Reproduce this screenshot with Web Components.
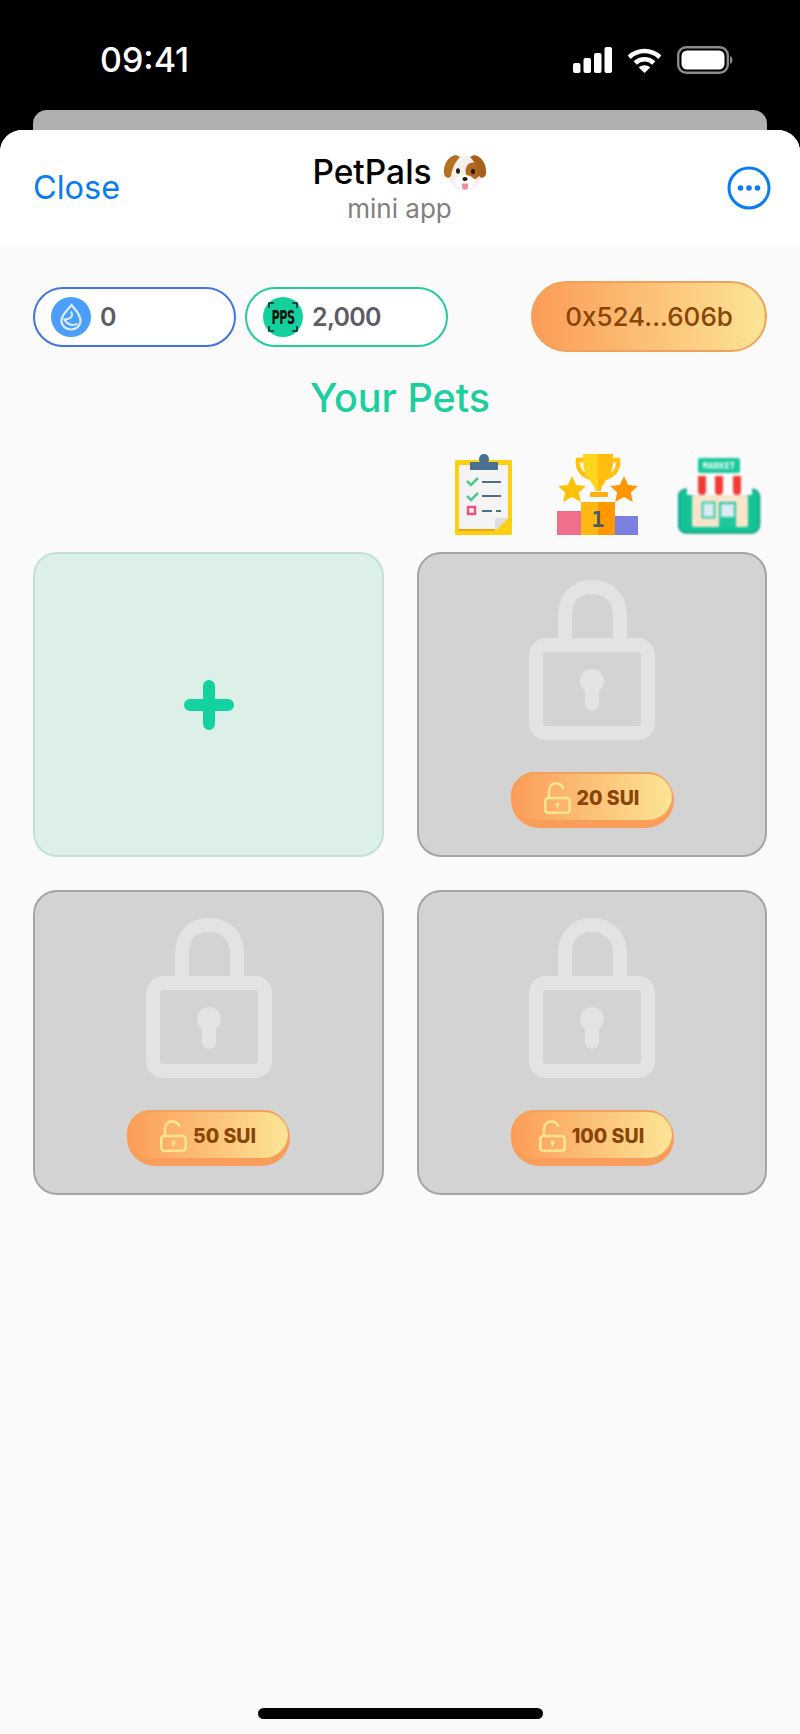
<!DOCTYPE html>
<html lang="en">
<head>
<meta charset="utf-8">
<title>PetPals</title>
<style>
  html, body { margin: 0; padding: 0; background: #000; }
  body { width: 800px; height: 1734px; font-family: Inter, "Liberation Sans", sans-serif; overflow: hidden; display: flex; flex-direction: column; }
</style>
</head>
<body>
<app-status-bar></app-status-bar>
<app-sheet>
  <sheet-header slot="header"></sheet-header>
  <balance-row>
    <balance-pill color="#3f75e2">
      <svg slot="icon" width="40" height="40" viewBox="0 0 40 40">
        <circle cx="20" cy="20" r="20" fill="#4c9efb"/>
        <path d="M20.5 8 C24 12.5 29.5 17 29.5 23.5 C29.5 29 25 32.5 20 32.5 C15 32.5 10.5 29 10.5 23.5 C10.5 18 16.5 13 20.5 8 Z" fill="none" stroke="#dcedff" stroke-width="2.2"/>
        <path d="M20 14.5 C23 19.5 19 22.5 13.5 22.5 C16 27.5 22 29.5 26.5 26.5" fill="none" stroke="#dcedff" stroke-width="2"/>
      </svg>
      0
    </balance-pill>
    <balance-pill color="#21cc9d">
      <svg slot="icon" width="40" height="40" viewBox="0 0 40 40">
        <circle cx="20" cy="20" r="20" fill="#14d09e"/>
        <path d="M6 11V6h5M34 11V6h-5M6 29v5h5M34 29v5h-5" fill="none" stroke="#0b2c28" stroke-width="1.6"/>
        <text transform="translate(20 27) scale(.66 1)" text-anchor="middle" font-family="'DejaVu Sans Condensed','DejaVu Sans',sans-serif" font-size="19" fill="#06130f">PPS</text>
      </svg>
      2,000
    </balance-pill>
    <wallet-chip>0x524...606b</wallet-chip>
  </balance-row>
  <section-title>Your Pets</section-title>
  <quick-icons></quick-icons>
  <pet-grid>
    <pet-slot add></pet-slot>
    <pet-slot price="20 SUI"></pet-slot>
    <pet-slot price="50 SUI"></pet-slot>
    <pet-slot price="100 SUI"></pet-slot>
  </pet-grid>
  <home-indicator slot="footer"></home-indicator>
</app-sheet>

<script>
class AppStatusBar extends HTMLElement {
  constructor() {
    super();
    this.attachShadow({ mode: "open" });
  }

  connectedCallback() {
    this.shadowRoot.innerHTML = `
      <style>
        :host { display: block; background: #000; height: 130px; flex: none; }
        .row { height: 110px; box-sizing: border-box; padding: 41px 67px 0 100px; display: flex; justify-content: space-between; align-items: flex-start; }
        .time { color: #fff; font: 500 34px/38px Inter, "Liberation Sans", sans-serif; }
        .icons { display: flex; gap: 15px; align-items: center; margin-top: 5px; }
        svg { display: block; }
        .back { height: 20px; margin: 0 33px; background: #b0b0b0; border-radius: 14px 14px 0 0; }
      </style>
      <div class="row">
        <span class="time">09:41</span>
        <div class="icons">
          <svg width="39" height="26" viewBox="0 0 39 26" fill="#fff">
            <rect x="0" y="16" width="7.5" height="10" rx="2"/>
            <rect x="10.5" y="11" width="7.5" height="15" rx="2"/>
            <rect x="21" y="6" width="7.5" height="20" rx="2"/>
            <rect x="31.5" y="0" width="7.5" height="26" rx="2"/>
          </svg>
          <svg width="35" height="25" viewBox="0 0 35 25" fill="none" stroke="#fff" stroke-width="4.6">
            <path d="M2.2 9.2 C11 1 24 1 32.8 9.2"/>
            <path d="M8.2 15 C13.6 10 21.4 10 26.8 15"/>
            <path d="M17.5 25 L11.8 19.5 C15 16.6 20 16.6 23.2 19.5 Z" fill="#fff" stroke="none"/>
          </svg>
          <svg width="56" height="28" viewBox="0 0 56 28">
            <rect x="1.2" y="1.2" width="49.6" height="25.6" rx="8" fill="none" stroke="#8c8c8c" stroke-width="2.4"/>
            <rect x="4.5" y="4.5" width="43" height="19" rx="5.5" fill="#fff"/>
            <path d="M53 10 C55 11 55.5 12.5 55.5 14 C55.5 15.5 55 17 53 18 Z" fill="#8c8c8c"/>
          </svg>
        </div>
      </div>
      <div class="back"></div>
    `;
  }
}

class AppSheet extends HTMLElement {
  constructor() {
    super();
    this.attachShadow({ mode: "open" });
  }

  connectedCallback() {
    this.shadowRoot.innerHTML = `
      <style>
        :host { display: flex; flex-direction: column; flex: 1; min-height: 0; background: #fafafa; border-radius: 22px 22px 0 0; overflow: hidden; }
        main { flex: 1; padding: 36px 33px 0; display: flex; flex-direction: column; }
      </style>
      <slot name="header"></slot>
      <main><slot></slot></main>
      <slot name="footer"></slot>
    `;
  }
}

class SheetHeader extends HTMLElement {
  constructor() {
    super();
    this.attachShadow({ mode: "open" });
  }

  connectedCallback() {
    this.shadowRoot.innerHTML = `
      <style>
        :host { display: grid; grid-template-columns: 1fr auto 1fr; align-items: center; height: 115px; background: #fff; padding: 0 29px 0 33px; box-sizing: border-box; }
        .close { color: #0a7cf2; font: 400 32.5px/40px Inter, "Liberation Sans", sans-serif; }
        .center { text-align: center; margin: -1px 5px 0 0; }
        .name { display: flex; align-items: center; justify-content: center; gap: 11px; height: 44px; color: #000; font: 500 33.5px/44px Inter, "Liberation Sans", sans-serif; }
        .sub { color: #808080; font: 400 26px/32px Inter, "Liberation Sans", sans-serif; margin-top: -1px; }
        .menu { justify-self: end; display: block; }
      </style>
      <span class="close">Close</span>
      <div class="center">
        <div class="name">PetPals
          <svg width="44" height="40" viewBox="0 0 44 38">
            <ellipse cx="22" cy="20" rx="17" ry="17" fill="#f4efea"/>
            <ellipse cx="30" cy="18" rx="7.5" ry="8.5" fill="#b4681d"/>
            <path d="M13 2 C5 3 0 12 1 21 C2 25 6 26 8 23 C9 17 11 10 17 4 Z" fill="#b4701f"/>
            <path d="M31 2 C39 3 44 12 43 21 C42 25 38 26 36 23 C35 17 33 10 27 4 Z" fill="#a9601a"/>
            <ellipse cx="22" cy="29" rx="10" ry="7" fill="#fff"/>
            <ellipse cx="15" cy="18" rx="2" ry="2.8" fill="#2a1c14"/>
            <ellipse cx="30" cy="18.5" rx="2" ry="2.8" fill="#2a1c14"/>
            <ellipse cx="22" cy="26" rx="2.6" ry="2" fill="#1f1612"/>
            <path d="M19 30.5 H25 V34 C25 37.5 19 37.5 19 34 Z" fill="#ee8fa0"/>
          </svg>
        </div>
        <div class="sub">mini app</div>
      </div>
      <svg class="menu" width="44" height="44" viewBox="0 0 44 44">
        <circle cx="22" cy="22" r="20" fill="none" stroke="#0a7cf2" stroke-width="3"/>
        <circle cx="13.5" cy="22" r="2.8" fill="#0a7cf2"/>
        <circle cx="22" cy="22" r="2.8" fill="#0a7cf2"/>
        <circle cx="30.5" cy="22" r="2.8" fill="#0a7cf2"/>
      </svg>
    `;
  }
}

class BalanceRow extends HTMLElement {
  constructor() {
    super();
    this.attachShadow({ mode: "open" });
  }

  connectedCallback() {
    this.shadowRoot.innerHTML = `
      <style>
        :host { display: flex; align-items: center; gap: 9px; height: 71px; }
      </style>
      <slot></slot>
    `;
  }
}

class BalancePill extends HTMLElement {
  constructor() {
    super();
    this.attachShadow({ mode: "open" });
  }

  connectedCallback() {
    const color = this.getAttribute("color");
    this.shadowRoot.innerHTML = `
      <style>
        :host { display: flex; align-items: center; gap: 9px; box-sizing: border-box; width: 203px; height: 60px; padding-left: 16px; border: 2px solid ${color}; border-radius: 30px; background: #fff; color: #5d5c66; font: 600 25px/32px Inter, "Liberation Sans", sans-serif; letter-spacing: -0.7px; }
        ::slotted(svg) { display: block; flex: none; }
      </style>
      <slot name="icon"></slot>
      <span><slot></slot></span>
    `;
  }
}

class WalletChip extends HTMLElement {
  constructor() {
    super();
    this.attachShadow({ mode: "open" });
  }

  connectedCallback() {
    this.shadowRoot.innerHTML = `
      <style>
        :host { display: flex; align-items: center; justify-content: center; box-sizing: border-box; margin-left: auto; width: 236px; height: 71px; border: 2px solid #f0a25c; border-radius: 36px; background: linear-gradient(90deg, #fb9c58, #fde596); color: #8a4406; font: 500 26px/32px Inter, "Liberation Sans", sans-serif; }
      </style>
      <slot></slot>
    `;
  }
}

class SectionTitle extends HTMLElement {
  constructor() {
    super();
    this.attachShadow({ mode: "open" });
  }

  connectedCallback() {
    this.shadowRoot.innerHTML = `
      <style>
        :host { display: block; margin-top: 24px; text-align: center; color: #1dcf9f; font: 500 39.5px/44px Inter, "Liberation Sans", sans-serif; }
      </style>
      <slot></slot>
    `;
  }
}

class QuickIcons extends HTMLElement {
  constructor() {
    super();
    this.attachShadow({ mode: "open" });
  }

  connectedCallback() {
    this.shadowRoot.innerHTML = `
      <style>
        :host { display: flex; justify-content: flex-end; height: 82px; margin-top: 33px; padding-right: 6px; }
        svg { display: block; }
        .task { margin-right: 32px; filter: blur(0.4px); }
        .rank { margin-right: 39px; filter: blur(0.4px); }
        .shop { filter: blur(1px); }
      </style>
      <svg class="task" width="82" height="82" viewBox="443 453 82 82">
        <rect x="455" y="460" width="57" height="75" rx="1" fill="#ffcf14"/>
        <path d="M459 465 H508 V518 L495 531 H459 Z" fill="#f4f4f5"/>
        <rect x="459" y="529" width="36" height="2" fill="#f5a30f"/>
        <path d="M508 518 H497 Q495 518 495 520 V531 Z" fill="#dedede"/>
        <circle cx="484" cy="459" r="5" fill="#4a6f8f"/>
        <rect x="470" y="462" width="28" height="8" rx="1" fill="#4a6f8f"/>
        <path d="M467 481 L471 485 L478 478 M467 496 L471 500 L478 493" fill="none" stroke="#4fc98d" stroke-width="2.5"/>
        <path d="M482 482 H501 M482 496 H501 M482 511 H492 M496 511 H501" stroke="#4a6f8f" stroke-width="2"/>
        <rect x="468" y="507" width="7" height="7" fill="none" stroke="#f0547a" stroke-width="2.5"/>
      </svg>
      <svg class="rank" width="82" height="82" viewBox="557 453 82 82">
        <path d="M584 460 H578 C577 468 581 475 591 478 M612 460 H618 C619 468 615 475 605 478" fill="none" stroke="#ffc20e" stroke-width="4.5"/>
        <path d="M583 454 H598 V491 H595 C595 486 592 484 589 479 C585 474 583 468 583 460 Z" fill="#ffd51e"/>
        <path d="M613 454 H598 V491 H601 C601 486 604 484 607 479 C611 474 613 468 613 460 Z" fill="#ffbe0d"/>
        <rect x="590" y="492" width="18" height="5" rx="1" fill="#ffb00f"/>
        <path d="M572 476 L576.2 485 L586 486 L578.8 492.5 L580.8 502 L572 497 L563.2 502 L565.2 492.5 L558 486 L567.8 485 Z" fill="#ffc107"/>
        <path d="M624 476 L628.2 485 L638 486 L630.8 492.5 L632.8 502 L624 497 L615.2 502 L617.2 492.5 L610 486 L619.8 485 Z" fill="#ff9500"/>
        <rect x="557" y="511" width="24" height="24" fill="#f0708c"/>
        <rect x="615" y="516" width="23" height="19" fill="#7a80e0"/>
        <rect x="581" y="502" width="17" height="33" fill="#fdb813"/>
        <rect x="598" y="502" width="17" height="33" fill="#ff9800"/>
        <text x="598" y="527" text-anchor="middle" font-family="'DejaVu Sans Mono','Liberation Mono',monospace" font-weight="700" font-size="22" fill="#4d5a66">1</text>
      </svg>
      <svg class="shop" width="83" height="82" viewBox="678 453 83 82">
        <rect x="678.5" y="489" width="81" height="44" rx="8" fill="#13c296" stroke="#0e9a7b" stroke-width="1.5"/>
        <rect x="692" y="495" width="56" height="32" rx="2" fill="#f7e6cc"/>
        <rect x="687" y="476" width="65" height="19" fill="#fbfbfb"/>
        <path d="M698 476 h8 v15 a4 4 0 0 1 -8 0 Z M715 476 h8 v15 a4 4 0 0 1 -8 0 Z M733 476 h8 v15 a4 4 0 0 1 -8 0 Z" fill="#f03a35"/>
        <rect x="698" y="458" width="42" height="15" rx="2" fill="#19c79b"/>
        <text x="719" y="469" text-anchor="middle" font-family="'DejaVu Sans Mono',monospace" font-weight="700" font-size="9" fill="#e9fff8">MARKET</text>
        <rect x="702.5" y="502.5" width="12" height="15" fill="#dbeaf5" stroke="#3fcaa5" stroke-width="2"/>
        <rect x="719" y="502" width="17" height="25" fill="#1fc79a"/>
        <rect x="721" y="504" width="13" height="13" fill="#dbeaf5"/>
      </svg>
    `;
  }
}

class PetGrid extends HTMLElement {
  constructor() {
    super();
    this.attachShadow({ mode: "open" });
  }

  connectedCallback() {
    this.shadowRoot.innerHTML = `
      <style>
        :host { display: grid; grid-template-columns: 351px 350px; grid-auto-rows: 305px; gap: 33px; margin-top: 17px; }
      </style>
      <slot></slot>
    `;
  }
}

class PetSlot extends HTMLElement {
  constructor() {
    super();
    this.attachShadow({ mode: "open" });
  }

  connectedCallback() {
    if (this.hasAttribute("add")) {
      this.renderAdd();
    } else {
      this.renderLocked();
    }
  }

  renderAdd() {
    this.shadowRoot.innerHTML = `
      <style>
        :host { display: flex; align-items: center; justify-content: center; box-sizing: border-box; background: #ddf0e8; border: 2px solid #c5dfd4; border-radius: 24px; }
        svg { display: block; }
      </style>
      <svg width="50" height="50" viewBox="0 0 50 50">
        <path d="M25 6 V44 M6 25 H44" stroke="#12d2a0" stroke-width="12" stroke-linecap="round"/>
      </svg>
    `;
  }

  renderLocked() {
    const price = this.getAttribute("price");
    this.shadowRoot.innerHTML = `
      <style>
        :host { display: flex; flex-direction: column; align-items: center; box-sizing: border-box; padding-top: 26px; background: #d3d3d3; border: 2px solid #a5a5a5; border-radius: 24px; }
        svg { display: block; }
        unlock-badge { margin-top: 32px; }
      </style>
      <svg width="126" height="160" viewBox="0 0 126 160">
        <path d="M36 60 V36 C36 17 47 7 63 7 C79 7 91 17 91 36 V60" fill="none" stroke="#e3e3e3" stroke-width="14"/>
        <rect x="7" y="65" width="112" height="88" rx="10" fill="none" stroke="#e3e3e3" stroke-width="14"/>
        <circle cx="63" cy="101" r="12" fill="#e3e3e3"/>
        <path d="M63 105 V124" stroke="#e3e3e3" stroke-width="14" stroke-linecap="round"/>
      </svg>
      <unlock-badge>${price}</unlock-badge>
    `;
  }
}

class UnlockBadge extends HTMLElement {
  constructor() {
    super();
    this.attachShadow({ mode: "open" });
  }

  connectedCallback() {
    this.shadowRoot.innerHTML = `
      <style>
        :host { display: block; width: 163px; height: 56px; box-sizing: border-box; padding: 0 2px 8px 0; border-radius: 28px; background: #fa9d5a; }
        .face { box-sizing: border-box; height: 48px; padding: 3px 0 0 1px; display: flex; align-items: center; justify-content: center; gap: 6px; border-radius: 24px; background: linear-gradient(90deg, #fb9c58, #fde596); box-shadow: inset 0 2px 0 #f0a25c; color: #8a4406; font: 800 19.5px/24px Inter, "Liberation Sans", sans-serif; }
        svg { display: block; flex: none; }
      </style>
      <div class="face">
        <svg width="27" height="32" viewBox="0 0 27 32">
          <rect x="1.3" y="16" width="24.4" height="14.7" rx="3" fill="none" stroke="#fde594" stroke-width="2.6"/>
          <path d="M5 16 V9 C5 4 8.5 1.4 12 1.4 C15.5 1.4 18.5 3.5 19.5 7" fill="none" stroke="#fde594" stroke-width="2.6"/>
          <circle cx="13.5" cy="22.3" r="2" fill="#fde594"/>
          <rect x="12.6" y="22" width="1.8" height="4.5" fill="#fde594"/>
        </svg>
        <span><slot></slot></span>
      </div>
    `;
  }
}

class HomeIndicator extends HTMLElement {
  constructor() {
    super();
    this.attachShadow({ mode: "open" });
  }

  connectedCallback() {
    this.shadowRoot.innerHTML = `
      <style>
        :host { display: flex; justify-content: center; padding-bottom: 15px; background: #fafafa; }
        div { width: 285px; height: 11px; border-radius: 6px; background: #000; }
      </style>
      <div></div>
    `;
  }
}

customElements.define("app-status-bar", AppStatusBar);
customElements.define("app-sheet", AppSheet);
customElements.define("sheet-header", SheetHeader);
customElements.define("balance-row", BalanceRow);
customElements.define("balance-pill", BalancePill);
customElements.define("wallet-chip", WalletChip);
customElements.define("section-title", SectionTitle);
customElements.define("quick-icons", QuickIcons);
customElements.define("pet-grid", PetGrid);
customElements.define("pet-slot", PetSlot);
customElements.define("unlock-badge", UnlockBadge);
customElements.define("home-indicator", HomeIndicator);
</script>
</body>
</html>
